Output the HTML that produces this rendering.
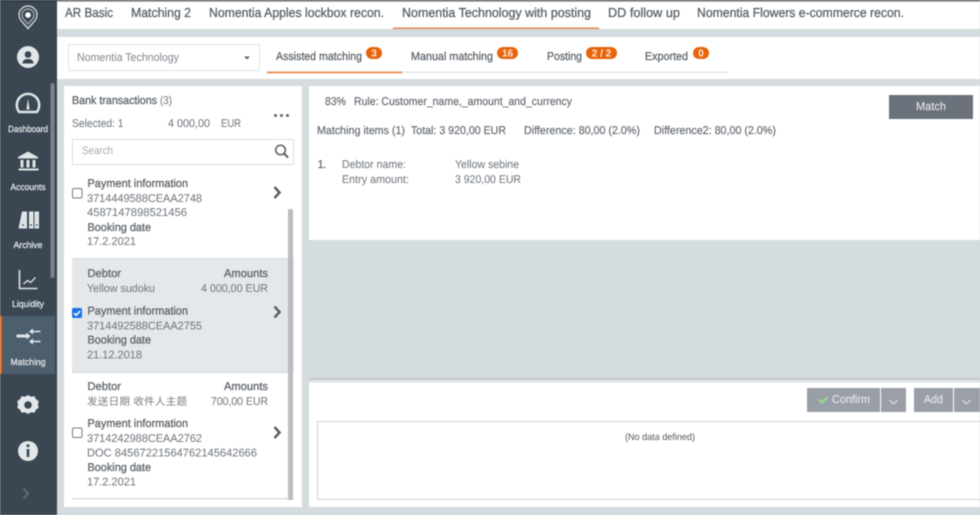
<!DOCTYPE html>
<html><head><meta charset="utf-8"><style>
html,body{margin:0;padding:0;width:980px;height:515px;overflow:hidden;background:#d5dcdf}
svg{display:block;filter:blur(.4px)}
text{font-family:"Liberation Sans","Noto Sans CJK SC",sans-serif;font-size:11px;fill:#6b7178}
.t{font-size:13px;fill:#5a636b;stroke:#5a636b;stroke-width:.3}
.s{font-size:11.5px;fill:#5a636b;stroke:#5a636b;stroke-width:.25}
.b{font-size:11.3px;fill:#646a71;stroke:#646a71;stroke-width:.35}
.m{font-size:11.3px;fill:#646a71;stroke:#646a71;stroke-width:.18}
.r{font-size:11.3px;fill:#777d83;stroke:#777d83;stroke-width:.08}
.n{font-size:9px;fill:#e4e9ec;stroke:#e4e9ec;stroke-width:.25}
.o{font-size:10px;font-weight:bold;fill:#ffe9d6}
.w{font-size:11.5px;fill:#e6e8ea;stroke:#e6e8ea;stroke-width:.1}
</style></head><body>
<svg width="980" height="515" viewBox="0 0 980 515" xmlns="http://www.w3.org/2000/svg" text-rendering="geometricPrecision">
<rect width="980" height="515" fill="#d5dcdf"/>
<!-- top tabs -->
<rect x="57" y="0" width="923" height="29" fill="#fff"/>
<rect x="57" y="0" width="923" height="1.5" fill="#666"/>
<rect x="57" y="37" width="923" height="42" fill="#fff"/>
<text class="t" x="65" y="17" textLength="48" lengthAdjust="spacingAndGlyphs">AR Basic</text>
<text class="t" x="131" y="17" textLength="60" lengthAdjust="spacingAndGlyphs">Matching 2</text>
<text class="t" x="209" y="17" textLength="175" lengthAdjust="spacingAndGlyphs">Nomentia Apples lockbox recon.</text>
<text class="t" x="402" y="17" textLength="189" lengthAdjust="spacingAndGlyphs">Nomentia Technology with posting</text>
<text class="t" x="608" y="17" textLength="72" lengthAdjust="spacingAndGlyphs">DD follow up</text>
<text class="t" x="697" y="17" textLength="207" lengthAdjust="spacingAndGlyphs">Nomentia Flowers e-commerce recon.</text>
<rect x="393" y="27.5" width="206" height="1.5" fill="#e88a4c"/>
<!-- filter row -->
<rect x="68.5" y="44.5" width="191" height="26" fill="#fff" stroke="#dfe3e5"/>
<text x="77" y="61" textLength="102" lengthAdjust="spacingAndGlyphs" style="font-size:11.5px;fill:#80868d">Nomentia Technology</text>
<path d="M244 56.500h6l-3 3z" fill="#666"/>
<text class="s" x="276" y="60" textLength="86" lengthAdjust="spacingAndGlyphs">Assisted matching</text>
<rect x="366" y="47" width="16" height="12" rx="6" fill="#e8640c"/>
<text class="o" x="374" y="56.500" text-anchor="middle">3</text>
<text class="s" x="411" y="60" textLength="82" lengthAdjust="spacingAndGlyphs">Manual matching</text>
<rect x="497" y="47" width="21" height="12" rx="6" fill="#e8640c"/>
<text class="o" x="507.500" y="56.500" text-anchor="middle">16</text>
<text class="s" x="547" y="60" textLength="35" lengthAdjust="spacingAndGlyphs">Posting</text>
<rect x="586" y="47" width="31" height="12" rx="6" fill="#e8640c"/>
<text class="o" x="601.500" y="56.500" text-anchor="middle">2 / 2</text>
<text class="s" x="645" y="60" textLength="43" lengthAdjust="spacingAndGlyphs">Exported</text>
<rect x="693" y="47" width="16" height="12" rx="6" fill="#e8640c"/>
<text class="o" x="701" y="56.500" text-anchor="middle">0</text>
<rect x="402" y="71.500" width="326" height="1.500" fill="#e3e6e8"/>
<rect x="267" y="71.500" width="135" height="1.800" fill="#e88a4c"/>
<!-- left panel -->
<rect x="64" y="86" width="238" height="421" fill="#fff"/>
<text class="b" x="72" y="104" textLength="85" lengthAdjust="spacingAndGlyphs">Bank transactions</text>
<text class="r" x="160" y="104" textLength="12" lengthAdjust="spacingAndGlyphs">(3)</text>
<text class="r" x="72" y="127" textLength="51.500" lengthAdjust="spacingAndGlyphs">Selected: 1</text>
<text class="r" x="168" y="127" textLength="42" lengthAdjust="spacingAndGlyphs">4 000,00</text>
<text class="r" x="221" y="127" textLength="20" lengthAdjust="spacingAndGlyphs">EUR</text>
<circle cx="275.500" cy="115.500" r="1.500" fill="#666"/><circle cx="281.500" cy="115.500" r="1.500" fill="#666"/><circle cx="287.500" cy="115.500" r="1.500" fill="#666"/>
<rect x="72.500" y="139.500" width="221" height="25" fill="#fff" stroke="#d8dcdf"/>
<text x="82" y="154" textLength="31" lengthAdjust="spacingAndGlyphs" style="font-size:11px;fill:#a3a8ad">Search</text>
<circle cx="280.500" cy="150" r="4.800" fill="none" stroke="#555c63" stroke-width="1.500"/><path d="M284 153.500l4 4" stroke="#555c63" stroke-width="2"/>
<!-- item 1 -->
<rect x="72.500" y="188.500" width="9.500" height="9.500" rx="1.500" fill="#fff" stroke="#777"/>
<text class="b" x="87.500" y="187" textLength="100.500" lengthAdjust="spacingAndGlyphs">Payment information</text>
<text class="r" x="87" y="202" textLength="115" lengthAdjust="spacingAndGlyphs">3714449588CEAA2748</text>
<text class="r" x="87" y="216" textLength="100" lengthAdjust="spacingAndGlyphs">4587147898521456</text>
<text class="b" x="87.500" y="231" textLength="63.500" lengthAdjust="spacingAndGlyphs">Booking date</text>
<text class="r" x="87" y="245" textLength="49" lengthAdjust="spacingAndGlyphs">17.2.2021</text>
<path d="M274.500 187l5 5.500-5 5.500" fill="none" stroke="#5a6067" stroke-width="2.500"/>
<!-- item 2 selected -->
<rect x="72" y="258" width="222" height="115" fill="#e4e8ea"/>
<rect x="72" y="258" width="222" height="2" fill="#dde1e4"/>
<rect x="72" y="371" width="222" height="2" fill="#d9dde0"/>
<text class="b" x="87.500" y="277" textLength="33.500" lengthAdjust="spacingAndGlyphs">Debtor</text>
<text class="b" x="224" y="277" textLength="44" lengthAdjust="spacingAndGlyphs">Amounts</text>
<text class="r" x="87" y="292" textLength="68" lengthAdjust="spacingAndGlyphs">Yellow sudoku</text>
<text class="r" x="201" y="292" textLength="67" lengthAdjust="spacingAndGlyphs">4 000,00 EUR</text>
<rect x="72" y="308" width="10" height="10" rx="1.500" fill="#1a73e8"/>
<path d="M74 313l2.300 2.300 3.800-4.300" fill="none" stroke="#fff" stroke-width="1.500"/>
<text class="b" x="87.500" y="314.500" textLength="100.500" lengthAdjust="spacingAndGlyphs">Payment information</text>
<text class="r" x="87" y="329.500" textLength="115" lengthAdjust="spacingAndGlyphs">3714492588CEAA2755</text>
<text class="b" x="87.500" y="343.500" textLength="63.500" lengthAdjust="spacingAndGlyphs">Booking date</text>
<text class="r" x="87" y="358.500" textLength="55" lengthAdjust="spacingAndGlyphs">21.12.2018</text>
<path d="M274.500 306.500l5 5.500-5 5.500" fill="none" stroke="#5a6067" stroke-width="2.500"/>
<!-- item 3 -->
<text class="b" x="87.500" y="390" textLength="33.500" lengthAdjust="spacingAndGlyphs">Debtor</text>
<text class="b" x="224" y="390" textLength="44" lengthAdjust="spacingAndGlyphs">Amounts</text>
<text class="r" x="87" y="405" textLength="100" style="font-size:10.500px;stroke-width:0">发送日期 收件人主题</text>
<text class="r" x="211" y="405" textLength="57" lengthAdjust="spacingAndGlyphs">700,00 EUR</text>
<rect x="72.500" y="428" width="9.500" height="9.500" rx="1.500" fill="#fff" stroke="#777"/>
<text class="b" x="87.500" y="427" textLength="100.500" lengthAdjust="spacingAndGlyphs">Payment information</text>
<text class="r" x="87" y="442" textLength="115" lengthAdjust="spacingAndGlyphs">3714242988CEAA2762</text>
<text class="r" x="87" y="456.500" textLength="170" lengthAdjust="spacingAndGlyphs">DOC 84567221564762145642666</text>
<text class="b" x="87.500" y="471" textLength="63.500" lengthAdjust="spacingAndGlyphs">Booking date</text>
<text class="r" x="87" y="485.500" textLength="49" lengthAdjust="spacingAndGlyphs">17.2.2021</text>
<path d="M274.500 427l5 5.500-5 5.500" fill="none" stroke="#5a6067" stroke-width="2.500"/>
<rect x="72" y="498" width="222" height="1.500" fill="#d9dde0"/>
<rect x="288" y="209" width="5" height="291" rx="2" fill="#b9bdc1"/>
<!-- right top -->
<rect x="309" y="86" width="671" height="154" fill="#fff"/>
<text class="m" x="325" y="105" textLength="21" lengthAdjust="spacingAndGlyphs">83%</text>
<text class="m" x="354" y="105" textLength="218" lengthAdjust="spacingAndGlyphs">Rule: Customer_name,_amount_and_currency</text>
<rect x="889" y="95" width="84" height="24" fill="#6b727c"/>
<text class="w" x="916" y="110" textLength="30" lengthAdjust="spacingAndGlyphs">Match</text>
<text class="m" x="317" y="134" textLength="88" lengthAdjust="spacingAndGlyphs">Matching items (1)</text>
<text class="m" x="411" y="134" textLength="95" lengthAdjust="spacingAndGlyphs">Total: 3 920,00 EUR</text>
<text class="m" x="524" y="134" textLength="116" lengthAdjust="spacingAndGlyphs">Difference: 80,00 (2.0%)</text>
<text class="m" x="654" y="134" textLength="122" lengthAdjust="spacingAndGlyphs">Difference2: 80,00 (2.0%)</text>
<text class="b" x="318" y="168" textLength="8" lengthAdjust="spacingAndGlyphs">1.</text>
<text class="r" x="342" y="168" textLength="64" lengthAdjust="spacingAndGlyphs">Debtor name:</text>
<text class="r" x="455" y="168" textLength="64" lengthAdjust="spacingAndGlyphs">Yellow sebine</text>
<text class="r" x="342" y="183" textLength="67" lengthAdjust="spacingAndGlyphs">Entry amount:</text>
<text class="r" x="455" y="183" textLength="66" lengthAdjust="spacingAndGlyphs">3 920,00 EUR</text>
<!-- right bottom -->
<rect x="309" y="378" width="671" height="2" fill="#c3cbcf"/>
<rect x="309" y="380" width="671" height="2.500" fill="#dde3e6"/>
<rect x="309" y="382.500" width="671" height="124.500" fill="#fff"/>
<rect x="807" y="388" width="73" height="24" fill="#9a9fa7"/>
<rect x="881" y="388" width="25" height="24" fill="#9a9fa7"/>
<rect x="914" y="388" width="39" height="24" fill="#9a9fa7"/>
<rect x="954" y="388" width="26" height="24" fill="#9a9fa7"/>
<path d="M819 399.500l3 3 5.500-5.500" fill="none" stroke="#8fe08c" stroke-width="2"/>
<text class="w" x="832" y="403" textLength="38" lengthAdjust="spacingAndGlyphs">Confirm</text>
<text class="w" x="924" y="403" textLength="19" lengthAdjust="spacingAndGlyphs">Add</text>
<path d="M889.500 400l4 4 4-4M962.500 400l4 4 4-4" fill="none" stroke="#e2e4e6" stroke-width="1.100"/>
<rect x="317.500" y="421.500" width="670" height="78" fill="#fff" stroke="#cfd3d6"/>
<text x="625" y="440" textLength="70" lengthAdjust="spacingAndGlyphs" style="font-size:9.500px;fill:#555">(No data defined)</text>
<!-- sidebar -->
<rect x="0" y="0" width="57" height="515" fill="#3a4651"/>
<rect x="0" y="0" width="57" height="1.500" fill="#2c3239"/>
<rect x="0" y="316" width="55" height="58" fill="#4d5e6d"/>
<rect x="0" y="316" width="2" height="58" fill="#e8640c"/>
<rect x="50.500" y="83" width="4" height="195" rx="2" fill="#7b838a"/>
<!-- pin -->
<path d="M28 28.500c-4-5-9-8.500-9-13.500a9 9 0 0 1 18 0c0 5-5 8.500-9 13.500z" fill="none" stroke="#c9ced2" stroke-width="1.500"/>
<path d="M28 24c-2.500-3-6-5.500-6-9a6 6 0 0 1 12 0c0 3.500-3.500 6-6 9z" fill="none" stroke="#aab1b6" stroke-width="1.200"/>
<circle cx="28" cy="15" r="2.800" fill="#fff"/>
<!-- user -->
<circle cx="28" cy="57" r="11" fill="#e1e6e9"/>
<circle cx="28" cy="54.500" r="3.300" fill="#3a4651"/>
<path d="M22.500 63.500c0-3.500 2.500-4.500 5.500-4.500s5.500 1 5.500 4.500z" fill="#3a4651"/>
<!-- dashboard -->
<path d="M19.200 112a11.200 11.200 0 1 1 17.600 0z" fill="none" stroke="#dfe4e7" stroke-width="2.500"/>
<path d="M28 98.500l1.600 11h-3.200z" fill="#dfe4e7"/>
<text class="n" x="8" y="132" textLength="40" lengthAdjust="spacingAndGlyphs">Dashboard</text>
<!-- accounts -->
<path d="M28 151.500l10 5.500v1.500h-20v-1.500z" fill="#dfe4e7"/>
<path d="M20.500 160h3v7.500h-3zM26.500 160h3v7.500h-3zM32.500 160h3v7.500h-3z" fill="#dfe4e7"/>
<rect x="18.500" y="168.500" width="20" height="2" fill="#dfe4e7"/>
<text class="n" x="10.500" y="190" textLength="35" lengthAdjust="spacingAndGlyphs">Accounts</text>
<!-- archive -->
<path d="M22 211.500h5v17h-8.500zM29 211.500h4.500v17H29zM34.500 211.500h4.500v17h-4.500z" fill="#dfe4e7"/>
<circle cx="23" cy="225" r=".9" fill="#3a4651"/><circle cx="31" cy="225" r=".9" fill="#3a4651"/><circle cx="36.700" cy="225" r=".9" fill="#3a4651"/>
<text class="n" x="13.500" y="248" textLength="29" lengthAdjust="spacingAndGlyphs">Archive</text>
<!-- liquidity -->
<path d="M19.500 270v18.500h18" fill="none" stroke="#dfe4e7" stroke-width="1.600"/>
<path d="M23.500 284l4-3.500 3 2 5-5" fill="none" stroke="#dfe4e7" stroke-width="1.300"/>
<text class="n" x="12" y="307" textLength="32" lengthAdjust="spacingAndGlyphs">Liquidity</text>
<!-- matching -->
<path d="M16.500 334.500h10v-2l4 3.500-4 3.500v-2h-10z" fill="#e0e5e8"/>
<path d="M40.500 331.500h-8" stroke="#e0e5e8" stroke-width="1.500"/><path d="M33 328.500l-4 3 4 3z" fill="#e0e5e8"/>
<path d="M40.500 341.500h-8" stroke="#e0e5e8" stroke-width="1.500"/><path d="M33 338.500l-4 3 4 3z" fill="#e0e5e8"/>
<text class="n" x="10.500" y="365" textLength="35" lengthAdjust="spacingAndGlyphs">Matching</text>
<!-- gear -->
<path d="M28 395l3 1.700 3.400-.4 1.600 3 2.700 2-.7 3.200.7 3.200-2.700 2-1.600 3-3.400-.4-3 1.700-3-1.700-3.400.4-1.600-3-2.700-2 .7-3.200-.7-3.200 2.700-2 1.600-3 3.400.4z" fill="#e4e8eb"/>
<circle cx="28" cy="405" r="3.800" fill="#3a4651"/>
<!-- info -->
<circle cx="28" cy="451" r="10" fill="#e4e8eb"/>
<circle cx="28" cy="445.800" r="1.500" fill="#3a4651"/>
<rect x="26.700" y="449" width="2.600" height="8" fill="#3a4651"/>
<!-- chevron -->
<path d="M23.500 488.500l4.500 5-4.500 5" fill="none" stroke="#646e77" stroke-width="2"/>
</svg>
</body></html>
